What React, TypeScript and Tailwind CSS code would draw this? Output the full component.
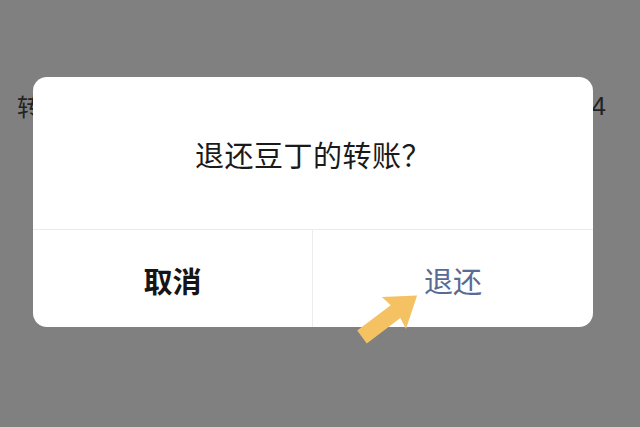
const Arrow = () => (
  <svg
    className="absolute left-[345px] top-[278px]"
    width="85"
    height="70"
    viewBox="0 0 85 70"
  >
    <g transform="translate(17 59) rotate(-37)">
      <polygon
        points="0,-8 42,-8 40,-20 69,0 40,20 42,8 0,8"
        fill="#f4c262"
      />
    </g>
  </svg>
);

const App = () => {
  return (
    <div
      className="relative w-[640px] h-[427px] overflow-hidden bg-[#808080]"
      style={{ fontFamily: '"Noto Sans CJK SC", "Noto Sans", sans-serif' }}
    >
      {/* page underneath the mask */}
      <div className="flex justify-between items-center pl-[17px] pr-[34px] pt-[93px] text-[#232323]">
        <span className="text-[24px] leading-none">转账</span>
        <span
          className="text-[26px] leading-none"
          style={{ fontFamily: '"Liberation Sans", sans-serif' }}
        >
          4
        </span>
      </div>

      {/* dialog */}
      <div className="absolute inset-0 flex items-start pl-[33px] pt-[77px]">
        <div className="w-[560px] h-[250px] bg-white rounded-[14px] flex flex-col overflow-hidden">
          <div className="h-[153px] flex items-center justify-center border-b border-[#ececec] pt-[2px]">
            <span className="text-[29px] text-[#1a1a1a] leading-none tracking-[0.5px]">退还豆丁的转账？</span>
          </div>
          <div className="flex-1 grid grid-cols-2">
            <button className="flex items-center justify-center border-r border-[#ececec] pt-[3px]">
              <span className="text-[29px] font-bold text-[#151515] leading-none">取消</span>
            </button>
            <button className="flex items-center justify-center pt-[3px]">
              <span className="text-[29px] text-[#576b95] leading-none">退还</span>
            </button>
          </div>
        </div>
      </div>

      <Arrow />
    </div>
  );
};

export default App;
